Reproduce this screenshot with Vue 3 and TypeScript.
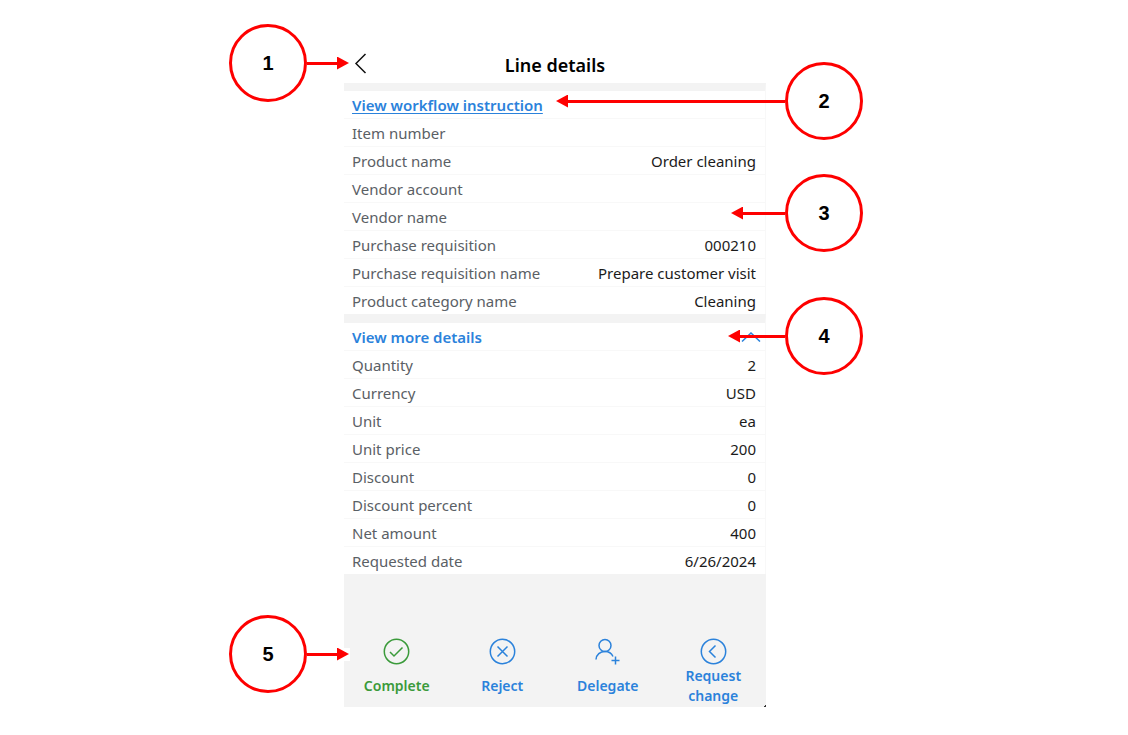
<script setup lang="ts">
import { ref } from 'vue'

interface Field {
  label: string
  value: string
}

interface Callout {
  id: number
  side: 'left' | 'right'
  top: number
  arrow: number
}

interface Action {
  label: string
  icon: 'check' | 'cross' | 'person' | 'return'
}

const summary: Field[] = [
  { label: 'Item number', value: '' },
  { label: 'Product name', value: 'Order cleaning' },
  { label: 'Vendor account', value: '' },
  { label: 'Vendor name', value: '' },
  { label: 'Purchase requisition', value: '000210' },
  { label: 'Purchase requisition name', value: 'Prepare customer visit' },
  { label: 'Product category name', value: 'Cleaning' },
]

const details: Field[] = [
  { label: 'Quantity', value: '2' },
  { label: 'Currency', value: 'USD' },
  { label: 'Unit', value: 'ea' },
  { label: 'Unit price', value: '200' },
  { label: 'Discount', value: '0' },
  { label: 'Discount percent', value: '0' },
  { label: 'Net amount', value: '400' },
  { label: 'Requested date', value: '6/26/2024' },
]

const actions: Action[] = [
  { label: 'Complete', icon: 'check' },
  { label: 'Reject', icon: 'cross' },
  { label: 'Delegate', icon: 'person' },
  { label: 'Request change', icon: 'return' },
]

const callouts: Callout[] = [
  { id: 1, side: 'left', top: 24, arrow: 43 },
  { id: 2, side: 'right', top: 62, arrow: 229 },
  { id: 3, side: 'right', top: 174, arrow: 54 },
  { id: 4, side: 'right', top: 297, arrow: 57 },
  { id: 5, side: 'left', top: 615, arrow: 43 },
]

const expanded = ref(true)
</script>

<template>
  <div class="page">
    <main class="panel">
      <header class="header">
        <button class="back" type="button" aria-label="Back">
          <svg width="14" height="22" viewBox="0 0 14 22" aria-hidden="true">
            <path d="M11.5 1 2 10.5l9.500 9.500" />
          </svg>
        </button>
        <h1>Line details</h1>
      </header>

      <section class="group">
        <div class="group-head">
          <a class="instruction" href="#instruction">View workflow instruction</a>
        </div>
        <table class="fields">
          <tbody>
            <tr v-for="field in summary" :key="field.label">
              <th scope="row">{{ field.label }}</th>
              <td>{{ field.value }}</td>
            </tr>
          </tbody>
        </table>
      </section>

      <section class="group">
        <button class="group-head" type="button" :aria-expanded="expanded" @click="expanded = !expanded">
          <span>View more details</span>
          <svg width="20" height="10" viewBox="0 0 20 10" aria-hidden="true" :class="{ flipped: !expanded }">
            <path d="M1 9.5 10 1l9 8.5" />
          </svg>
        </button>
        <table v-if="expanded" class="fields">
          <tbody>
            <tr v-for="field in details" :key="field.label">
              <th scope="row">{{ field.label }}</th>
              <td>{{ field.value }}</td>
            </tr>
          </tbody>
        </table>
      </section>

      <footer class="actions">
        <button v-for="action in actions" :key="action.label" type="button" class="action" :class="action.icon">
          <svg width="27" height="27" viewBox="0 0 27 27" aria-hidden="true">
            <template v-if="action.icon === 'person'">
              <circle cx="11" cy="7.5" r="6" />
              <path d="M2 21.500c.3-5 4.200-8 9-8 3.500 0 6.500 1.700 8 5M17.500 22.500h8M21.500 18.500v8" />
            </template>
            <template v-else>
              <circle cx="13.5" cy="13.5" r="12.2" />
              <path v-if="action.icon === 'check'" d="M7 14l4 4 8.500-8.500" />
              <path v-else-if="action.icon === 'cross'" d="M8.500 8.500l10 10M18.500 8.500l-10 10" />
              <path v-else d="M15.500 7.500l-6 6 6 6" />
            </template>
          </svg>
          <span class="action-label">{{ action.label }}</span>
        </button>
      </footer>

      <div
        v-for="callout in callouts"
        :key="callout.id"
        class="callout"
        :class="callout.side"
        :style="{ top: callout.top + 'px' }"
      >
        <span class="bubble">{{ callout.id }}</span>
        <span class="arrow" :style="{ width: callout.arrow + 'px' }"></span>
      </div>
    </main>
  </div>
</template>

<style>
body {
  margin: 0;
  background: #fff;
}
</style>

<style scoped>
.page {
  display: flex;
  justify-content: center;
  padding: 0 132px 28px 114px;
  font-family: 'Segoe UI', 'Noto Sans', sans-serif;
  font-size: 15px;
  line-height: 20px;
  color: #1b1b1b;
}

.panel {
  position: relative;
  width: 100%;
  max-width: 422px;
}

button {
  margin: 0;
  padding: 0;
  border: 0;
  background: none;
  font: inherit;
  color: inherit;
  cursor: pointer;
}

svg {
  fill: none;
  stroke: currentColor;
  stroke-width: 1.5;
}

.header {
  display: grid;
  grid-template-columns: 32px 1fr 32px;
  align-items: center;
  box-sizing: border-box;
  height: 83px;
  padding-top: 44px;
}

.back {
  display: flex;
  padding-left: 10px;
  color: #111;
}

h1 {
  margin: 0;
  padding-top: 2px;
  font-size: 18px;
  line-height: 24px;
  font-weight: 600;
  text-align: center;
  color: #000;
}

.group {
  border-top: 8px solid #f3f3f3;
  border-right: 1px solid #f8f8f8;
}

.group + .group {
  border-top-width: 9px;
}

.group-head {
  display: flex;
  align-items: center;
  justify-content: space-between;
  box-sizing: border-box;
  width: 100%;
  height: 27px;
  padding: 0 4px 0 8px;
  font-weight: 600;
  color: #2b82db;
}

.instruction {
  color: inherit;
  text-underline-offset: 2px;
}

.flipped {
  transform: rotate(180deg);
}

.fields {
  width: 100%;
  border-collapse: separate;
  border-spacing: 0;
}

th,
td {
  height: 27px;
  padding: 0 9px 0 8px;
  border-top: 1px solid #f8f8f8;
}

th {
  font-weight: 400;
  text-align: left;
  color: #5a6065;
}

td {
  text-align: right;
}

.actions {
  display: grid;
  grid-template-columns: repeat(4, 1fr);
  padding: 64px 0 1px;
  background: linear-gradient(135deg, transparent 50%, #333 50%) right bottom / 2px 3px no-repeat, #f3f3f3;
}

.action {
  display: flex;
  flex-direction: column;
  align-items: center;
  gap: 1px;
  font-size: 14px;
  font-weight: 600;
  color: #2b82db;
}

.action.check {
  color: #3a9a3a;
}

.action-label {
  display: flex;
  align-items: center;
  max-width: 72px;
  min-height: 40px;
}

.callout {
  position: absolute;
  display: flex;
  align-items: center;
  pointer-events: none;
}

.callout.left {
  left: -115px;
}

.callout.right {
  right: -97px;
  flex-direction: row-reverse;
}

.bubble {
  display: flex;
  align-items: center;
  justify-content: center;
  box-sizing: border-box;
  width: 78px;
  height: 78px;
  border: 3px solid #fe0000;
  border-radius: 50%;
  background: #fff;
  font-family: 'Liberation Sans', Arial, sans-serif;
  font-size: 20px;
  font-weight: 700;
  color: #000;
}

.arrow {
  display: flex;
  align-items: center;
  height: 13px;
}

.left .arrow {
  padding-right: 1px;
  box-sizing: border-box;
  background: #fff;
}

.right .arrow {
  flex-direction: row-reverse;
}

.arrow::before {
  content: '';
  flex: 1;
  height: 3px;
  background: #fe0000;
}

.arrow::after {
  content: '';
  width: 12px;
  height: 13px;
  background: #fe0000;
  clip-path: polygon(0 0, 100% 50%, 0 100%);
}

.right .arrow::after {
  clip-path: polygon(100% 0, 0 50%, 100% 100%);
}
</style>
